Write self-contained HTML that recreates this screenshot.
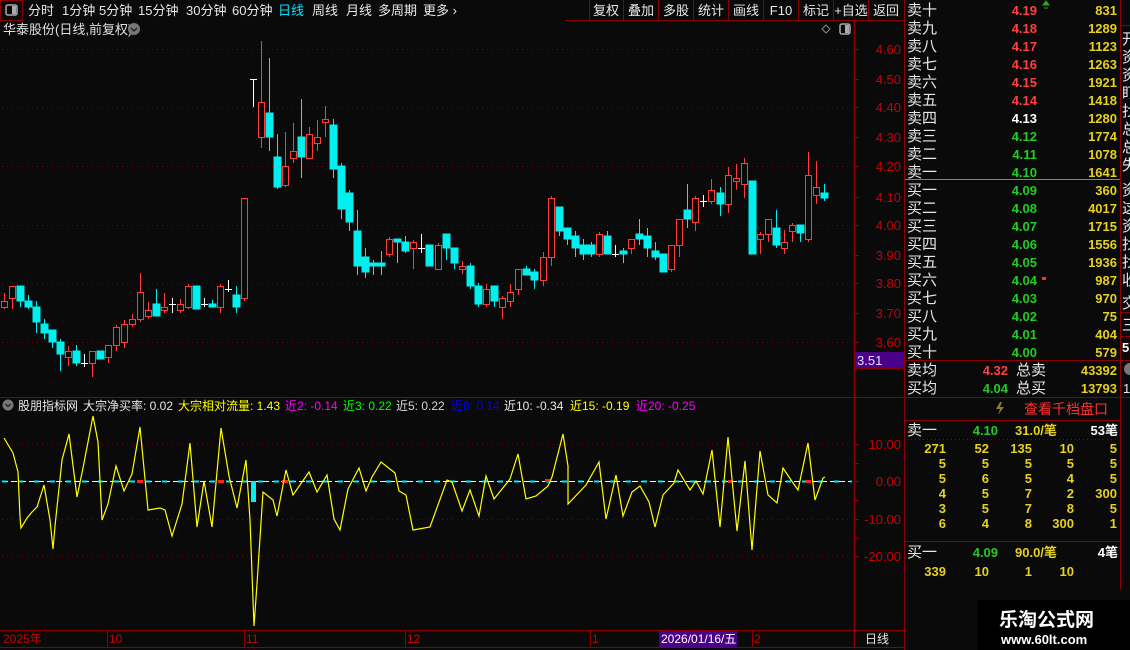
<!DOCTYPE html>
<html><head><meta charset="utf-8"><style>
html,body{margin:0;padding:0;background:#0a0a0a;width:1130px;height:650px;overflow:hidden}
svg{display:block}
text{font-family:"Liberation Sans","Noto Sans CJK SC",sans-serif}
</style></head><body>
<svg width="1130" height="650" viewBox="0 0 1130 650" xmlns="http://www.w3.org/2000/svg">
<rect width="1130" height="650" fill="#0a0a0a"/>

<!-- toolbar -->
<rect x="0.5" y="0.5" width="22" height="20" fill="none" stroke="#8b0000"/>
<rect x="6" y="5" width="11" height="10" rx="2" fill="none" stroke="#aaa" stroke-width="1.5"/>
<rect x="12" y="6" width="4" height="8" fill="#aaa"/>
<g font-size="13" fill="#e8e8e8">
<text x="28" y="15">分时</text><text x="62" y="15">1分钟</text><text x="99" y="15">5分钟</text>
<text x="138" y="15">15分钟</text><text x="186" y="15">30分钟</text><text x="232" y="15">60分钟</text>
<text x="278" y="15" fill="#00e5ff">日线</text><text x="312" y="15">周线</text><text x="346" y="15">月线</text>
<text x="378" y="15">多周期</text><text x="423" y="15">更多 ›</text>
</g>
<line x1="565" y1="20.5" x2="905" y2="20.5" stroke="#8b0000"/>
<g stroke="#8b0000"><line x1="589.5" y1="0" x2="589.5" y2="20"/><line x1="623.5" y1="0" x2="623.5" y2="20"/><line x1="658.5" y1="0" x2="658.5" y2="20"/><line x1="693.5" y1="0" x2="693.5" y2="20"/><line x1="728.5" y1="0" x2="728.5" y2="20"/><line x1="763.5" y1="0" x2="763.5" y2="20"/><line x1="798.5" y1="0" x2="798.5" y2="20"/><line x1="833.5" y1="0" x2="833.5" y2="20"/><line x1="868.5" y1="0" x2="868.5" y2="20"/></g>
<g font-size="13" fill="#e8e8e8" text-anchor="middle">
<text x="606" y="15">复权</text><text x="641" y="15">叠加</text><text x="676" y="15">多股</text><text x="711" y="15">统计</text><text x="746" y="15">画线</text><text x="781" y="15">F10</text><text x="816" y="15">标记</text><text x="851" y="15">+自选</text><text x="886" y="15">返回</text>
</g>

<!-- chart header -->
<text x="3" y="34" font-size="13" fill="#e0e0e0">华泰股份(日线,前复权)</text>
<circle cx="134" cy="29" r="6" fill="#777"/><path d="M131 28 l3 3 l3 -3" stroke="#222" stroke-width="1.5" fill="none"/>
<path d="M826 25 l4 4 l-4 4 l-4 -4z" fill="none" stroke="#888"/>
<rect x="840" y="24" width="10" height="10" rx="2" fill="none" stroke="#aaa" stroke-width="1.5"/><rect x="845" y="25" width="4" height="8" fill="#aaa"/>

<!-- grids main -->
<g stroke="#7a0000" stroke-dasharray="1 4">
<line x1="2" y1="49.5" x2="852" y2="49.5"/><line x1="2" y1="107.5" x2="852" y2="107.5"/><line x1="2" y1="166.5" x2="852" y2="166.5"/><line x1="2" y1="225.5" x2="852" y2="225.5"/><line x1="2" y1="283.5" x2="852" y2="283.5"/><line x1="2" y1="342.5" x2="852" y2="342.5"/>
<line x1="2" y1="444.5" x2="852" y2="444.5"/><line x1="2" y1="519.5" x2="852" y2="519.5"/><line x1="2" y1="556.5" x2="852" y2="556.5"/>
</g>

<!-- axis -->
<line x1="854.5" y1="21" x2="854.5" y2="648" stroke="#8b0000" stroke-width="1.5"/>
<line x1="904.5" y1="0" x2="904.5" y2="650" stroke="#8b0000"/>
<line x1="0" y1="397.5" x2="904" y2="397.5" stroke="#8b0000"/>
<line x1="0" y1="630.5" x2="904" y2="630.5" stroke="#8b0000"/>
<line x1="0" y1="647.5" x2="904" y2="647.5" stroke="#8b0000"/>
<g stroke="#8b0000"><line x1="855" y1="49.5" x2="859" y2="49.5"/><line x1="855" y1="79.5" x2="859" y2="79.5"/><line x1="855" y1="107.5" x2="859" y2="107.5"/><line x1="855" y1="137.5" x2="859" y2="137.5"/><line x1="855" y1="166.5" x2="859" y2="166.5"/><line x1="855" y1="197.5" x2="859" y2="197.5"/><line x1="855" y1="225.5" x2="859" y2="225.5"/><line x1="855" y1="255.5" x2="859" y2="255.5"/><line x1="855" y1="283.5" x2="859" y2="283.5"/><line x1="855" y1="313.5" x2="859" y2="313.5"/><line x1="855" y1="342.5" x2="859" y2="342.5"/>
<line x1="855" y1="444.5" x2="859" y2="444.5"/><line x1="855" y1="463.5" x2="859" y2="463.5"/><line x1="855" y1="481.5" x2="859" y2="481.5"/><line x1="855" y1="500.5" x2="859" y2="500.5"/><line x1="855" y1="519.5" x2="859" y2="519.5"/><line x1="855" y1="538.5" x2="859" y2="538.5"/><line x1="855" y1="556.5" x2="859" y2="556.5"/></g>
<g font-size="13" fill="#cc0000" text-anchor="end">
<text x="901" y="54">4.60</text><text x="901" y="84">4.50</text><text x="901" y="112">4.40</text><text x="901" y="142">4.30</text><text x="901" y="171">4.20</text><text x="901" y="202">4.10</text><text x="901" y="230">4.00</text><text x="901" y="260">3.90</text><text x="901" y="288">3.80</text><text x="901" y="318">3.70</text><text x="901" y="347">3.60</text>
<text x="901" y="449">10.00</text><text x="901" y="486">0.00</text><text x="901" y="524">-10.00</text><text x="901" y="561">-20.00</text>
</g>
<rect x="855" y="352" width="49" height="16" fill="#4a0088"/>
<line x1="855" y1="368.5" x2="904" y2="368.5" stroke="#8b0000"/>
<text x="857" y="365" font-size="13" fill="#e0e0ff">3.51</text>

<!-- candles -->
<g stroke-width="1" shape-rendering="crispEdges">
<g stroke="#ff3c3c" fill="#0a0a0a">
<line x1="4.5" y1="293" x2="4.5" y2="309"/><rect x="1.5" y="301.5" width="6" height="6"/>
<line x1="12.5" y1="286" x2="12.5" y2="309"/><rect x="9.5" y="286.5" width="6" height="12"/>
<line x1="68.5" y1="346" x2="68.5" y2="366"/><rect x="65.5" y="351.5" width="6" height="6"/>
<line x1="92.5" y1="351" x2="92.5" y2="377"/><rect x="89.5" y="351.5" width="6" height="12"/>
<line x1="108.5" y1="345" x2="108.5" y2="363"/><rect x="105.5" y="345.5" width="6" height="12"/>
<line x1="116.5" y1="325" x2="116.5" y2="351"/><rect x="113.5" y="327.5" width="6" height="18"/>
<line x1="124.5" y1="320" x2="124.5" y2="348"/><rect x="121.5" y="324.5" width="6" height="18"/>
<line x1="132.5" y1="314" x2="132.5" y2="327"/><rect x="129.5" y="319.5" width="6" height="5"/>
<line x1="140.5" y1="273" x2="140.5" y2="322"/><rect x="137.5" y="292.5" width="6" height="27"/>
<line x1="148.5" y1="302" x2="148.5" y2="319"/><rect x="145.5" y="310.5" width="6" height="6"/>
<line x1="164.5" y1="293" x2="164.5" y2="313"/><rect x="161.5" y="307.5" width="6" height="3"/>
<line x1="180.5" y1="299" x2="180.5" y2="313"/><rect x="177.5" y="304.5" width="6" height="6"/>
<line x1="188.5" y1="284" x2="188.5" y2="309"/><rect x="185.5" y="286.5" width="6" height="21"/>
<line x1="220.5" y1="284" x2="220.5" y2="313"/><rect x="217.5" y="286.5" width="6" height="21"/>
<line x1="244.5" y1="198" x2="244.5" y2="301"/><rect x="241.5" y="198.5" width="6" height="100"/>
<line x1="261.5" y1="41" x2="261.5" y2="148"/><rect x="258.5" y="102.5" width="6" height="35"/>
<line x1="285.5" y1="132" x2="285.5" y2="187"/><rect x="282.5" y="166.5" width="6" height="19"/>
<line x1="293.5" y1="123" x2="293.5" y2="163"/><rect x="290.5" y="151.5" width="6" height="7"/>
<line x1="309.5" y1="127" x2="309.5" y2="158"/><rect x="306.5" y="134.5" width="6" height="24"/>
<line x1="317.5" y1="120" x2="317.5" y2="151"/><rect x="314.5" y="137.5" width="6" height="6"/>
<line x1="325.5" y1="106" x2="325.5" y2="137"/><rect x="322.5" y="119.5" width="6" height="3"/>
<line x1="389.5" y1="237" x2="389.5" y2="257"/><rect x="386.5" y="239.5" width="6" height="15"/>
<line x1="413.5" y1="240" x2="413.5" y2="269"/><rect x="410.5" y="242.5" width="6" height="6"/>
<line x1="438.5" y1="243" x2="438.5" y2="269"/><rect x="435.5" y="245.5" width="6" height="24"/>
<line x1="462.5" y1="261" x2="462.5" y2="274"/><rect x="459.5" y="266.5" width="6" height="3"/>
<line x1="486.5" y1="284" x2="486.5" y2="307"/><rect x="483.5" y="289.5" width="6" height="15"/>
<line x1="502.5" y1="296" x2="502.5" y2="319"/><rect x="499.5" y="298.5" width="6" height="9"/>
<line x1="510.5" y1="284" x2="510.5" y2="307"/><rect x="507.5" y="292.5" width="6" height="9"/>
<line x1="518.5" y1="269" x2="518.5" y2="295"/><rect x="515.5" y="269.5" width="6" height="20"/>
<line x1="543.5" y1="252" x2="543.5" y2="286"/><rect x="540.5" y="257.5" width="6" height="23"/>
<line x1="551.5" y1="196" x2="551.5" y2="266"/><rect x="548.5" y="198.5" width="6" height="59"/>
<line x1="599.5" y1="232" x2="599.5" y2="257"/><rect x="596.5" y="234.5" width="6" height="20"/>
<line x1="631.5" y1="239" x2="631.5" y2="254"/><rect x="628.5" y="239.5" width="6" height="9"/>
<line x1="671.5" y1="245" x2="671.5" y2="272"/><rect x="668.5" y="245.5" width="6" height="24"/>
<line x1="679.5" y1="219" x2="679.5" y2="257"/><rect x="676.5" y="219.5" width="6" height="26"/>
<line x1="695.5" y1="196" x2="695.5" y2="231"/><rect x="692.5" y="198.5" width="6" height="24"/>
<line x1="711.5" y1="179" x2="711.5" y2="204"/><rect x="708.5" y="190.5" width="6" height="11"/>
<line x1="728.5" y1="167" x2="728.5" y2="213"/><rect x="725.5" y="175.5" width="6" height="29"/>
<line x1="736.5" y1="164" x2="736.5" y2="190"/><rect x="733.5" y="178.5" width="6" height="3"/>
<line x1="744.5" y1="158" x2="744.5" y2="198"/><rect x="741.5" y="163.5" width="6" height="21"/>
<line x1="760.5" y1="232" x2="760.5" y2="254"/><rect x="757.5" y="234.5" width="6" height="5"/>
<line x1="768.5" y1="219" x2="768.5" y2="242"/><rect x="765.5" y="219.5" width="6" height="15"/>
<line x1="784.5" y1="230" x2="784.5" y2="254"/><rect x="781.5" y="242.5" width="6" height="6"/>
<line x1="792.5" y1="223" x2="792.5" y2="242"/><rect x="789.5" y="225.5" width="6" height="6"/>
<line x1="808.5" y1="152" x2="808.5" y2="242"/><rect x="805.5" y="175.5" width="6" height="64"/>
<line x1="816.5" y1="161" x2="816.5" y2="204"/><rect x="813.5" y="187.5" width="6" height="8"/>
</g>
<g stroke="#00f0f0" fill="#00f0f0">
<line x1="20.5" y1="286" x2="20.5" y2="307"/><rect x="17" y="286" width="7" height="15"/>
<line x1="28.5" y1="295" x2="28.5" y2="309"/><rect x="25" y="301" width="7" height="6"/>
<line x1="36.5" y1="301" x2="36.5" y2="333"/><rect x="33" y="307" width="7" height="15"/>
<line x1="44.5" y1="319" x2="44.5" y2="339"/><rect x="41" y="324" width="7" height="9"/>
<line x1="52.5" y1="330" x2="52.5" y2="348"/><rect x="49" y="330" width="7" height="12"/>
<line x1="60.5" y1="339" x2="60.5" y2="371"/><rect x="57" y="342" width="7" height="12"/>
<line x1="76.5" y1="345" x2="76.5" y2="366"/><rect x="73" y="351" width="7" height="12"/>
<rect x="97" y="351" width="7" height="8"/>
<line x1="156.5" y1="289" x2="156.5" y2="316"/><rect x="153" y="304" width="7" height="12"/>
<rect x="193" y="286" width="7" height="23"/>
<rect x="209" y="304" width="7" height="3"/><line x1="212.5" y1="300" x2="212.5" y2="307"/>
<line x1="236.5" y1="286" x2="236.5" y2="313"/><rect x="233" y="295" width="7" height="12"/>
<line x1="269.5" y1="58" x2="269.5" y2="151"/><rect x="266" y="113" width="7" height="24"/>
<line x1="277.5" y1="134" x2="277.5" y2="189"/><rect x="274" y="157" width="7" height="30"/>
<line x1="301.5" y1="99" x2="301.5" y2="178"/><rect x="298" y="137" width="7" height="20"/>
<line x1="333.5" y1="119" x2="333.5" y2="178"/><rect x="330" y="125" width="7" height="44"/>
<line x1="341.5" y1="163" x2="341.5" y2="219"/><rect x="338" y="166" width="7" height="43"/>
<line x1="349.5" y1="190" x2="349.5" y2="231"/><rect x="346" y="193" width="7" height="29"/>
<line x1="357.5" y1="210" x2="357.5" y2="275"/><rect x="354" y="231" width="7" height="35"/>
<line x1="365.5" y1="248" x2="365.5" y2="278"/><rect x="362" y="257" width="7" height="15"/>
<line x1="373.5" y1="260" x2="373.5" y2="275"/><rect x="370" y="263" width="7" height="3"/>
<line x1="381.5" y1="251" x2="381.5" y2="275"/><rect x="378" y="263" width="7" height="3"/>
<line x1="397.5" y1="239" x2="397.5" y2="263"/><rect x="394" y="239" width="7" height="3"/>
<line x1="405.5" y1="236" x2="405.5" y2="253"/><rect x="402" y="242" width="7" height="9"/>
<rect x="426" y="245" width="7" height="21"/>
<line x1="446.5" y1="234" x2="446.5" y2="260"/><rect x="443" y="234" width="7" height="14"/>
<line x1="454.5" y1="248" x2="454.5" y2="269"/><rect x="451" y="248" width="7" height="15"/>
<line x1="470.5" y1="263" x2="470.5" y2="289"/><rect x="467" y="266" width="7" height="20"/>
<line x1="478.5" y1="283" x2="478.5" y2="307"/><rect x="475" y="286" width="7" height="18"/>
<line x1="494.5" y1="286" x2="494.5" y2="307"/><rect x="491" y="286" width="7" height="15"/>
<line x1="526.5" y1="266" x2="526.5" y2="275"/><rect x="523" y="269" width="7" height="6"/>
<line x1="534.5" y1="269" x2="534.5" y2="289"/><rect x="531" y="272" width="7" height="8"/>
<line x1="559.5" y1="207" x2="559.5" y2="236"/><rect x="556" y="207" width="7" height="24"/>
<line x1="567.5" y1="228" x2="567.5" y2="245"/><rect x="564" y="228" width="7" height="11"/>
<line x1="575.5" y1="231" x2="575.5" y2="257"/><rect x="572" y="236" width="7" height="12"/>
<line x1="583.5" y1="239" x2="583.5" y2="260"/><rect x="580" y="245" width="7" height="9"/>
<line x1="591.5" y1="242" x2="591.5" y2="257"/><rect x="588" y="245" width="7" height="9"/>
<line x1="607.5" y1="231" x2="607.5" y2="254"/><rect x="604" y="236" width="7" height="18"/>
<line x1="623.5" y1="248" x2="623.5" y2="263"/><rect x="620" y="251" width="7" height="3"/>
<line x1="639.5" y1="219" x2="639.5" y2="245"/><rect x="636" y="234" width="7" height="5"/>
<line x1="647.5" y1="228" x2="647.5" y2="257"/><rect x="644" y="236" width="7" height="12"/>
<line x1="655.5" y1="242" x2="655.5" y2="260"/><rect x="652" y="251" width="7" height="6"/>
<rect x="660" y="254" width="7" height="18"/>
<line x1="687.5" y1="184" x2="687.5" y2="228"/><rect x="684" y="210" width="7" height="9"/>
<line x1="720.5" y1="187" x2="720.5" y2="216"/><rect x="717" y="193" width="7" height="11"/>
<rect x="749" y="181" width="7" height="73"/>
<line x1="776.5" y1="210" x2="776.5" y2="248"/><rect x="773" y="228" width="7" height="17"/>
<line x1="800.5" y1="225" x2="800.5" y2="242"/><rect x="797" y="225" width="7" height="8"/>
<line x1="824.5" y1="184" x2="824.5" y2="201"/><rect x="821" y="193" width="7" height="5"/>
</g>
<g stroke="#ffffff">
<line x1="84.5" y1="354" x2="84.5" y2="367"/><line x1="81" y1="363.5" x2="88" y2="363.5"/>
<line x1="172.5" y1="298" x2="172.5" y2="313"/><line x1="169" y1="304.5" x2="176" y2="304.5"/>
<line x1="204.5" y1="298" x2="204.5" y2="307"/><line x1="201" y1="304.5" x2="208" y2="304.5"/>
<line x1="228.5" y1="280" x2="228.5" y2="292"/><line x1="225" y1="289.5" x2="232" y2="289.5"/>
<line x1="253.5" y1="79" x2="253.5" y2="107"/><line x1="250" y1="79.5" x2="257" y2="79.5"/>
<line x1="421.5" y1="234" x2="421.5" y2="253"/><line x1="418" y1="248.5" x2="425" y2="248.5"/>
<line x1="615.5" y1="245" x2="615.5" y2="257"/><line x1="612" y1="254.5" x2="619" y2="254.5"/>
<line x1="703.5" y1="195" x2="703.5" y2="207"/><line x1="700" y1="201.5" x2="707" y2="201.5"/>
</g>
</g>

<!-- indicator header -->
<circle cx="8" cy="405" r="5.5" fill="#777"/><path d="M5.5 404 l2.5 2.5 l2.5 -2.5" stroke="#222" stroke-width="1.3" fill="none"/>
<g font-size="12">
<text x="18" y="410" fill="#e8e8e8">股朋指标网</text>
<text x="83" y="410" fill="#e8e8e8">大宗净买率: 0.02</text>
<text x="178" y="410" fill="#ffff00">大宗相对流量: 1.43</text>
<text x="285" y="410" fill="#ff00ff">近2: -0.14</text>
<text x="343" y="410" fill="#00ff00">近3: 0.22</text>
<text x="396" y="410" fill="#d8d8d8">近5: 0.22</text>
<text x="451" y="410" fill="#0000ff">近8: 0.14</text>
<text x="504" y="410" fill="#e8e8e8">近10: -0.34</text>
<text x="570" y="410" fill="#ffff00">近15: -0.19</text>
<text x="636" y="410" fill="#ff00ff">近20: -0.25</text>
</g>

<!-- zero line -->
<line x1="2" y1="481.5" x2="852" y2="481.5" stroke="#ffffff" stroke-dasharray="6 3"/>
<line x1="2" y1="481.5" x2="852" y2="481.5" stroke="#00e5ff" stroke-width="2" stroke-dasharray="5 11"/>
<g fill="#ff2020"><rect x="137" y="480" width="6" height="3"/><rect x="218" y="480" width="6" height="3"/><rect x="282" y="480" width="6" height="3"/><rect x="545" y="479" width="5" height="3"/><rect x="728" y="480" width="5" height="3"/><rect x="806" y="480" width="5" height="3"/></g>
<rect x="251" y="481" width="5" height="21" fill="#00f0f0"/>
<polyline fill="none" stroke="#ffff00" stroke-width="1.2" points="4,438 13,453 18,472 20,517 21,528 27,518 32,512 37,507 44,485 50,520 53,549 55,526 62,460 69,434 77,497 83,468 93,416 98,442 102,520 108,504 116,466 124,491 132,474 140,427 148,510 160,508 165,510 172,536 182,504 190,443 197,527 204,481 212,527 221,428 229,476 237,508 246,460 250,520 254,626 257,584 263,492 273,500 277,516 286,470 293,495 309,472 317,492 327,475 334,519 340,530 348,489 359,468 366,491 372,477 381,462 395,473 399,491 406,495 413,530 430,527 447,480 452,482 462,511 470,490 479,516 486,476 494,499 510,479 518,454 526,499 536,496 548,486 552,477 563,434 568,466 568,504 586,485 599,462 606,519 616,475 623,516 632,492 640,486 649,502 655,527 663,495 674,483 678,470 690,490 696,481 703,494 712,450 720,527 728,437 737,531 745,461 752,550 760,451 768,495 777,503 783,468 791,480 798,490 808,443 815,500 823,478 825,477"/>

<!-- date axis -->
<g font-size="12" fill="#cc0000">
<text x="3" y="643">2025年</text><text x="109" y="643">10</text><text x="246" y="643">11</text><text x="407" y="643">12</text><text x="592" y="643">1</text><text x="754" y="643">2</text>
</g>
<g stroke="#8b0000"><line x1="107.5" y1="631" x2="107.5" y2="647"/><line x1="244.5" y1="631" x2="244.5" y2="647"/><line x1="405.5" y1="631" x2="405.5" y2="647"/><line x1="590.5" y1="631" x2="590.5" y2="647"/><line x1="752.5" y1="631" x2="752.5" y2="647"/></g>
<rect x="659" y="631" width="78" height="16" fill="#4a0088"/>
<text x="661" y="643" font-size="12" fill="#ffffff">2026/01/16/五</text>
<text x="865" y="643" font-size="12" fill="#e8e8e8">日线</text>

<!-- right panel lines -->
<line x1="905" y1="179.5" x2="1120" y2="179.5" stroke="#4a90d0"/>
<line x1="1120.5" y1="0" x2="1120.5" y2="397" stroke="#8b0000"/>
<g stroke="#8b0000">
<line x1="905" y1="360.5" x2="1130" y2="360.5"/><line x1="905" y1="397.5" x2="1130" y2="397.5"/><line x1="905" y1="420.5" x2="1120" y2="420.5"/><line x1="905" y1="541.5" x2="1120" y2="541.5"/>
<line x1="1120" y1="25.5" x2="1130" y2="25.5"/><line x1="1120" y1="312.5" x2="1130" y2="312.5"/><line x1="1120" y1="336.5" x2="1130" y2="336.5"/>
</g>
<line x1="1120.5" y1="398" x2="1120.5" y2="590" stroke="#8b0000"/>
<line x1="907" y1="439.5" x2="1118" y2="439.5" stroke="#8b0000" stroke-dasharray="1 3"/>

<!-- order book -->
<g font-size="15" fill="#e8e8e8">
<text x="907" y="15">卖十</text><text x="907" y="33">卖九</text><text x="907" y="51">卖八</text><text x="907" y="69">卖七</text><text x="907" y="87">卖六</text><text x="907" y="105">卖五</text><text x="907" y="123">卖四</text><text x="907" y="141">卖三</text><text x="907" y="159">卖二</text><text x="907" y="177">卖一</text>
<text x="907" y="195">买一</text><text x="907" y="213">买二</text><text x="907" y="231">买三</text><text x="907" y="249">买四</text><text x="907" y="267">买五</text><text x="907" y="285">买六</text><text x="907" y="303">买七</text><text x="907" y="321">买八</text><text x="907" y="339">买九</text><text x="907" y="357">买十</text>
<text x="907" y="375">卖均</text><text x="907" y="393">买均</text>
<text x="1016" y="375">总卖</text><text x="1016" y="393">总买</text>
</g>
<g font-size="13" font-weight="bold" text-anchor="end">
<g fill="#ff4040"><text x="1037" y="15">4.19</text><text x="1037" y="33">4.18</text><text x="1037" y="51">4.17</text><text x="1037" y="69">4.16</text><text x="1037" y="87">4.15</text><text x="1037" y="105">4.14</text><text x="1008" y="375">4.32</text></g>
<text x="1037" y="123" fill="#ffffff">4.13</text>
<g fill="#22cc22"><text x="1037" y="141">4.12</text><text x="1037" y="159">4.11</text><text x="1037" y="177">4.10</text><text x="1037" y="195">4.09</text><text x="1037" y="213">4.08</text><text x="1037" y="231">4.07</text><text x="1037" y="249">4.06</text><text x="1037" y="267">4.05</text><text x="1037" y="285">4.04</text><text x="1037" y="303">4.03</text><text x="1037" y="321">4.02</text><text x="1037" y="339">4.01</text><text x="1037" y="357">4.00</text><text x="1008" y="393">4.04</text></g>
<g fill="#e6d020"><text x="1117" y="15">831</text><text x="1117" y="33">1289</text><text x="1117" y="51">1123</text><text x="1117" y="69">1263</text><text x="1117" y="87">1921</text><text x="1117" y="105">1418</text><text x="1117" y="123">1280</text><text x="1117" y="141">1774</text><text x="1117" y="159">1078</text><text x="1117" y="177">1641</text>
<text x="1117" y="195">360</text><text x="1117" y="213">4017</text><text x="1117" y="231">1715</text><text x="1117" y="249">1556</text><text x="1117" y="267">1936</text><text x="1117" y="285">987</text><text x="1117" y="303">970</text><text x="1117" y="321">75</text><text x="1117" y="339">404</text><text x="1117" y="357">579</text><text x="1117" y="375">43392</text><text x="1117" y="393">13793</text></g>
</g>
<path d="M1043 5 l3 -4 l3 4z M1044 8 h4" stroke="#22aa22" fill="#22aa22" stroke-width="1"/>
<rect x="1042" y="277" width="4" height="3" fill="#ff3030"/>

<!-- far right strip -->
<g font-size="15" fill="#e8e8e8"><text x="1122" y="44">开</text><text x="1122" y="62">资</text><text x="1122" y="80">资</text><text x="1122" y="98">盯</text><text x="1122" y="116">找</text><text x="1122" y="134">总</text><text x="1122" y="152">总</text><text x="1122" y="170">失</text><text x="1122" y="195">资</text><text x="1122" y="213">这</text><text x="1122" y="231">资</text><text x="1122" y="249">找</text><text x="1122" y="267">找</text><text x="1122" y="285">收</text><text x="1122" y="308">交</text><text x="1122" y="330">三</text></g>
<text x="1122" y="352" font-size="13" font-weight="bold" fill="#fff">5</text>
<circle cx="1130" cy="369" r="6" fill="#777"/>
<text x="1123" y="393" font-size="13" fill="#e8e8e8">1</text>

<!-- 千档 -->
<path d="M1000 402 l-4 7 h4 l-2 6 l6 -8 h-4 l2 -5z" fill="#8a7a30"/>
<text x="1024" y="414" font-size="14" fill="#ff3030">查看千档盘口</text>

<g font-size="15" fill="#e8e8e8"><text x="907" y="435">卖一</text><text x="907" y="557">买一</text></g>
<g font-size="13" font-weight="bold" text-anchor="end">
<text x="998" y="435" fill="#22cc22">4.10</text><text x="998" y="557" fill="#22cc22">4.09</text>
<text x="1118" y="435" fill="#ffffff">53笔</text><text x="1118" y="557" fill="#ffffff">4笔</text>
</g>
<g font-size="13" font-weight="bold" fill="#e6d020"><text x="1015" y="435">31.0/笔</text><text x="1015" y="557">90.0/笔</text></g>
<g font-size="13" font-weight="bold" fill="#e6d020" text-anchor="end">
<text x="946" y="453">271</text><text x="989" y="453">52</text><text x="1032" y="453">135</text><text x="1074" y="453">10</text><text x="1117" y="453">5</text>
<text x="946" y="468">5</text><text x="989" y="468">5</text><text x="1032" y="468">5</text><text x="1074" y="468">5</text><text x="1117" y="468">5</text>
<text x="946" y="483">5</text><text x="989" y="483">6</text><text x="1032" y="483">5</text><text x="1074" y="483">4</text><text x="1117" y="483">5</text>
<text x="946" y="498">4</text><text x="989" y="498">5</text><text x="1032" y="498">7</text><text x="1074" y="498">2</text><text x="1117" y="498">300</text>
<text x="946" y="513">3</text><text x="989" y="513">5</text><text x="1032" y="513">7</text><text x="1074" y="513">8</text><text x="1117" y="513">5</text>
<text x="946" y="528">6</text><text x="989" y="528">4</text><text x="1032" y="528">8</text><text x="1074" y="528">300</text><text x="1117" y="528">1</text>
<text x="946" y="576">339</text><text x="989" y="576">10</text><text x="1032" y="576">1</text><text x="1074" y="576">10</text>
</g>

<!-- watermark -->
<rect x="978" y="600" width="152" height="50" fill="#000"/>
<text x="999" y="626" font-family="'Noto Serif CJK SC','Liberation Serif',serif" font-size="19" font-weight="bold" fill="#ffffff">乐淘公式网</text>
<text x="1001" y="644" font-family="'Liberation Serif',serif" font-size="13" font-weight="bold" fill="#ffffff">www.60lt.com</text>
</svg>
</body></html>
